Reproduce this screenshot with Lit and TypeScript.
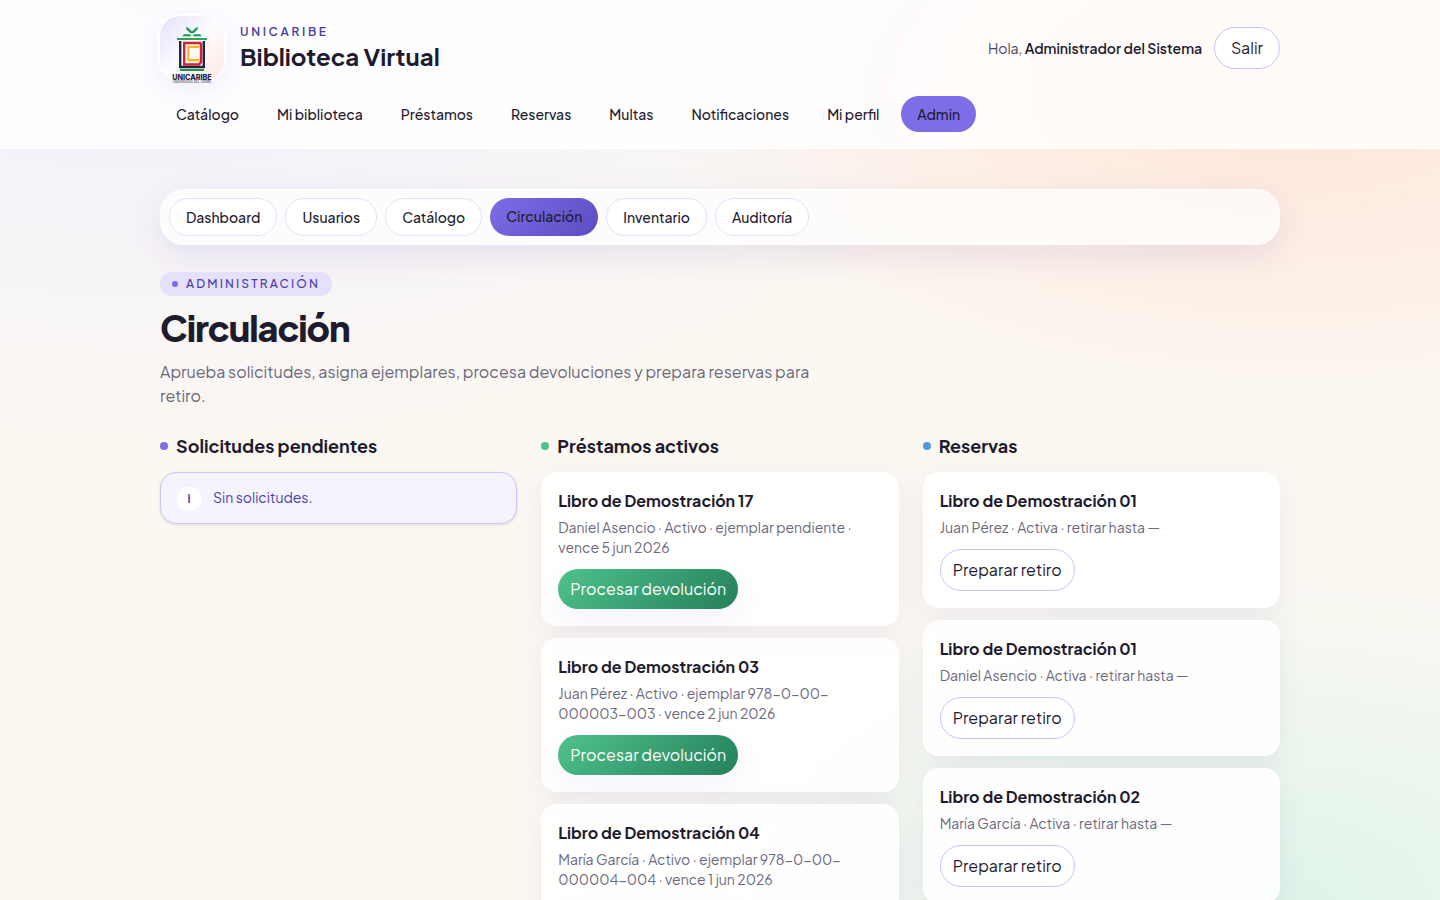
import { LitElement, html, css } from "lit";
import { customElement } from "lit/decorators.js";
import { classMap } from "lit/directives/class-map.js";

const mainLinks = ["Catálogo", "Mi biblioteca", "Préstamos", "Reservas", "Multas", "Notificaciones", "Mi perfil", "Admin"];
const adminLinks = ["Dashboard", "Usuarios", "Catálogo", "Circulación", "Inventario", "Auditoría"];

const loans = [
  { title: "Libro de Demostración 17", meta: "Daniel Asencio · Activo · ejemplar pendiente · vence 5 jun 2026" },
  { title: "Libro de Demostración 03", meta: "Juan Pérez · Activo · ejemplar 978-0-00-000003-003 · vence 2 jun 2026" },
  { title: "Libro de Demostración 04", meta: "María García · Activo · ejemplar 978-0-00-000004-004 · vence 1 jun 2026" },
];

const holds = [
  { title: "Libro de Demostración 01", meta: "Juan Pérez · Activa · retirar hasta —" },
  { title: "Libro de Demostración 01", meta: "Daniel Asencio · Activa · retirar hasta —" },
  { title: "Libro de Demostración 02", meta: "María García · Activa · retirar hasta —" },
];

@customElement("app-root")
export class AppRoot extends LitElement {
  static styles = css`
    :host {
      display: block;
      min-height: 100vh;
      color: #1e1b2e;
      font: 400 16px/24px "Plus Jakarta Sans", Inter, sans-serif;
      text-rendering: optimizeLegibility;
      background:
        radial-gradient(ellipse 60% 50% at 10% 0%, #f1effd, transparent),
        radial-gradient(ellipse 45% 36% at 90% 10%, #ffe4d8, transparent),
        radial-gradient(ellipse 42% 36% at 88% 100%, #dff4e9, transparent),
        #fbf8f2;
      background-attachment: fixed;
    }
    * { box-sizing: border-box; }
    h1, h2, h3, p { margin: 0; }
    a { color: inherit; text-decoration: none; }
    button { font: inherit; color: inherit; cursor: pointer; }
    .wrap { max-width: 1168px; margin: 0 auto; padding: 0 24px; }
    .header { background: rgba(255, 255, 255, 0.8); border-bottom: 1px solid rgba(255, 255, 255, 0.7); padding: 16px 0; }
    .top { display: flex; align-items: center; justify-content: space-between; }
    .brand { display: flex; align-items: center; gap: 16px; }
    .tile {
      width: 64px; height: 64px; border-radius: 20px;
      display: flex; justify-content: center; align-items: flex-start; padding-top: 8px;
      background: linear-gradient(135deg, #e6e0fb, #fdfcff 50%, #ffe8dc);
      box-shadow: 0 0 0 2px rgba(255, 255, 255, 0.8), 0 8px 24px rgba(91, 76, 196, 0.08);
    }
    .logo { display: block; flex: none; width: 44px; height: 60px; overflow: visible; }
    .org { font-size: 12px; line-height: 16px; font-weight: 600; letter-spacing: 0.22em; color: #4b3fa5; }
    .name { font-size: 24px; line-height: 32px; font-weight: 700; }
    .user { display: flex; align-items: center; gap: 12px; font-size: 14px; line-height: 20px; color: #4a4660; }
    .user strong { color: #1e1b2e; font-weight: 600; }
    .nav { display: flex; flex-wrap: wrap; gap: 6px; margin-top: 16px; }
    .nav-link { padding: 8px 16px; border-radius: 18px; font-size: 14px; line-height: 20px; font-weight: 500; }
    .nav-link.on { background: #7d6ee7; }
    .btn { border-radius: 21px; padding: 8px 12px; border: 1px solid #cdc3f7; background: #fff; }
    .btn.wide { padding: 8px 16px; font-size: 16px; line-height: 24px; color: #1e1b2e; }
    .btn.green {
      border: 0; color: #fff; background: linear-gradient(135deg, #4fc28d, #25805a);
      box-shadow: 0 12px 28px rgba(125, 110, 231, 0.08);
    }
    .tabs {
      display: flex; flex-wrap: wrap; gap: 8px; margin-top: 40px; padding: 8px; border-radius: 24px;
      border: 1px solid rgba(255, 255, 255, 0.8); background: rgba(255, 255, 255, 0.7);
      box-shadow: 0 12px 32px rgba(75, 63, 165, 0.1);
    }
    .tab {
      padding: 8px 16px; border: 1px solid #e6e0fb; border-radius: 19px; background: #fff;
      font-size: 14px; line-height: 20px; font-weight: 500;
    }
    .tab.on { border: 0; background: linear-gradient(135deg, #7d6ee7, #5b4cc4); }
    .eyebrow {
      display: inline-flex; align-items: center; gap: 8px; margin-top: 27px; padding: 4px 12px;
      border-radius: 12px; background: #e6e0fb; color: #4b3fa5;
      font-size: 12px; line-height: 16px; font-weight: 500; letter-spacing: 0.18em;
    }
    .eyebrow::before { content: ""; width: 6px; height: 6px; border-radius: 50%; background: #7d6ee7; }
    .title { font-size: 36px; line-height: 40px; font-weight: 800; letter-spacing: -0.03em; margin-top: 12px; }
    .lead { margin-top: 12px; max-width: 672px; color: #6b6880; }
    .columns { display: grid; grid-template-columns: repeat(3, minmax(0, 1fr)); gap: 24px; margin-top: 24px; }
    .col { display: grid; gap: 12px; align-content: start; }
    .col-title { display: flex; align-items: center; gap: 8px; font-size: 18px; line-height: 28px; font-weight: 700; }
    .col-title::before { content: ""; width: 8px; height: 8px; border-radius: 50%; background: #7d6ee7; }
    .col-title.loans::before { background: #4fc28d; }
    .col-title.holds::before { background: #4c9bdb; }
    .notice {
      display: flex; gap: 12px; padding: 12px 16px; border: 1px solid #cdc3f7; border-radius: 16px;
      background: #f5f3fe; color: #4b3fa5; font-size: 14px; box-shadow: 0 1px 3px rgba(30, 27, 46, 0.12);
    }
    .info {
      width: 24px; height: 24px; margin-top: 2px; border-radius: 50%; background: #fff;
      font-size: 12px; font-weight: 700; text-align: center;
    }
    .card {
      padding: 16px; border: 1px solid rgba(255, 255, 255, 0.8); border-radius: 16px;
      background: rgba(255, 255, 255, 0.88); box-shadow: 0 8px 28px rgba(75, 63, 165, 0.08);
    }
    .card-title { font-size: 16px; line-height: 24px; font-weight: 700; }
    .meta { margin: 4px 0 12px; font-size: 14px; line-height: 20px; color: #6b6880; }
    .card .btn { display: block; }
  `;

  private logo() {
    return html`<svg class="logo" viewBox="0 0 44 60" aria-hidden="true">
      <path d="M16 3.200l1.800 .2l4.200 4.200l4.200-4.200l1.800-.2l-.4 2l-4 4h-3.200l-4-4z" fill="#17994a" />
      <path d="M12 12.200l2-2h6l1.500 2zM32 12.200l-2-2h-6l-1.500 2z" fill="#17994a" />
      <g fill="none">
        <path d="M7 15h30" stroke="#17994a" stroke-width="1.800" />
        <path d="M10.200 17v26h23.600v-26" stroke="#20234a" stroke-width="2.400" />
        <path d="M14.200 19h15.800l1 1v18l-2 2.500h-14.800z" stroke="#d3222e" stroke-width="2.400" />
        <path d="M29 22.800h-10.600v13.400h10.600" stroke="#f9b524" stroke-width="2.200" />
        <path d="M10 46h24" stroke="#17994a" stroke-width="2" />
      </g>
      <text x="22" y="55.600" text-anchor="middle" font-size="7.200" font-weight="800" fill="#20234a" font-family="Inter, sans-serif">UNICARIBE</text>
      <text x="22" y="59" text-anchor="middle" font-size="3" fill="#20234a" font-family="Inter, sans-serif">UNIVERSIDAD DEL CARIBE</text>
    </svg>`;
  }

  render() {
    return html`
      <header class="header">
        <div class="wrap">
          <div class="top">
            <a class="brand" href="#">
              <span class="tile">${this.logo()}</span>
              <div>
                <div class="org">UNICARIBE</div>
                <div class="name">Biblioteca Virtual</div>
              </div>
            </a>
            <div class="user">
              <span>Hola, <strong>Administrador del Sistema</strong></span>
              <button class="btn wide">Salir</button>
            </div>
          </div>
          <nav class="nav" aria-label="Principal">
            ${mainLinks.map((t) => html`<a href="#" class=${classMap({ "nav-link": true, on: t === "Admin" })}>${t}</a>`)}
          </nav>
        </div>
      </header>
      <main class="wrap">
        <nav class="tabs" aria-label="Administración">
          ${adminLinks.map((t) => html`<a href="#" class=${classMap({ tab: true, on: t === "Circulación" })}>${t}</a>`)}
        </nav>
        <div class="eyebrow">ADMINISTRACIÓN</div>
        <h1 class="title">Circulación</h1>
        <p class="lead">Aprueba solicitudes, asigna ejemplares, procesa devoluciones y prepara reservas para retiro.</p>
        <div class="columns">
          <section class="col">
            <h2 class="col-title">Solicitudes pendientes</h2>
            <div class="notice"><span class="info">i</span><span>Sin solicitudes.</span></div>
          </section>
          <section class="col">
            <h2 class="col-title loans">Préstamos activos</h2>
            ${loans.map((l) => html`<article class="card">
              <h3 class="card-title">${l.title}</h3>
              <p class="meta">${l.meta}</p>
              <button class="btn green">Procesar devolución</button>
            </article>`)}
          </section>
          <section class="col">
            <h2 class="col-title holds">Reservas</h2>
            ${holds.map((r) => html`<article class="card">
              <h3 class="card-title">${r.title}</h3>
              <p class="meta">${r.meta}</p>
              <button class="btn">Preparar retiro</button>
            </article>`)}
          </section>
        </div>
      </main>
    `;
  }
}
